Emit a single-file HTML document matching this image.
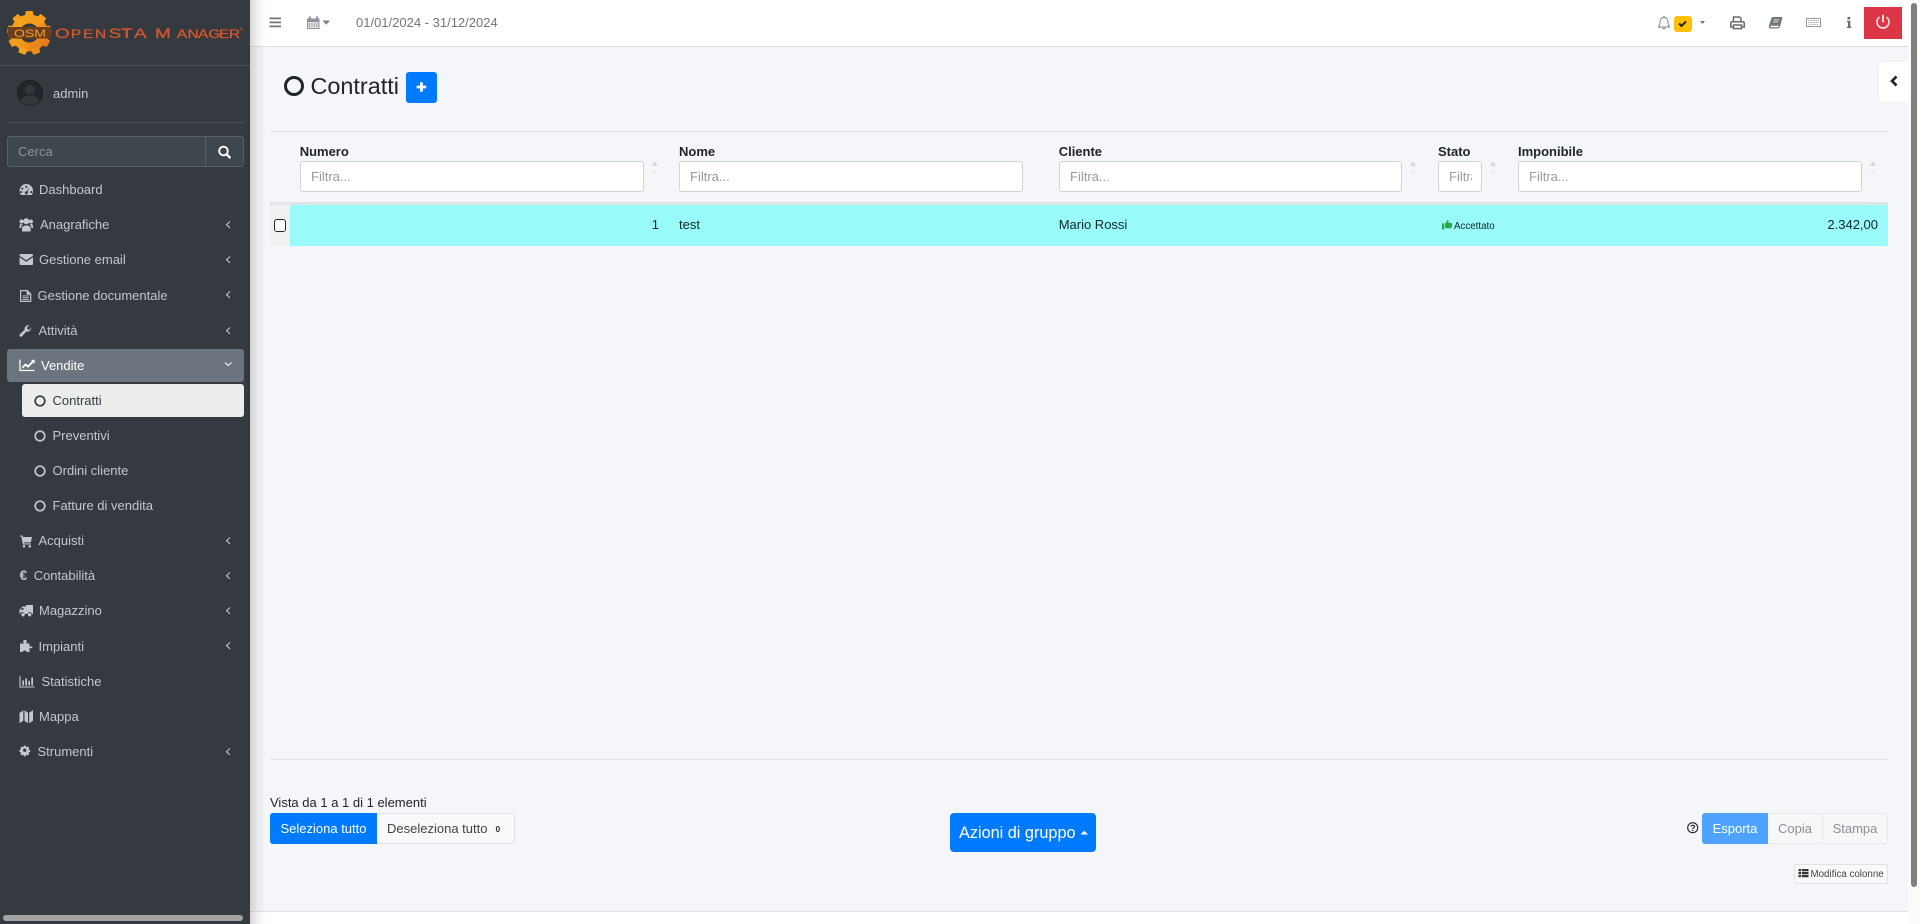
<!DOCTYPE html>
<html lang="it"><head><meta charset="utf-8"><title>Contratti</title>
<style>
html,body{margin:0;padding:0;width:1920px;height:924px;overflow:hidden;background:#fff;font-family:"Liberation Sans",sans-serif;font-size:13px;color:#212529}
*{box-sizing:border-box}
.a{position:absolute}
.t{position:absolute;white-space:nowrap;line-height:20px;height:20px}
#side{position:absolute;left:0;top:0;width:250px;height:924px;background:#343a40;z-index:3}
#side .t{color:#c2c7d0}
#shadow{position:absolute;left:250px;top:0;width:16px;height:924px;background:linear-gradient(90deg,rgba(0,0,0,.15),rgba(0,0,0,.05) 50%,rgba(0,0,0,0));z-index:2}
#top{position:absolute;left:250px;top:0;width:1658px;height:47px;background:#fff;border-bottom:1px solid #dee2e6}
#main{position:absolute;left:250px;top:47px;width:1658px;height:864px;background:#f4f6f9}
.inp{position:absolute;top:161px;height:31px;background:#fff;border:1px solid #ced4da;border-radius:3px;color:#939ba2;line-height:29px;padding-left:10px;overflow:hidden;white-space:nowrap}
.th{font-weight:bold;color:#212529}
.btn{position:absolute;line-height:31px;text-align:center;white-space:nowrap}
svg{position:absolute;left:0;top:0;overflow:visible}
</style></head><body>
<div id="top"></div>
<div id="main"></div>
<div class="a" style="left:250px;top:911px;width:1658px;height:13px;background:#fff;border-top:1px solid #dee2e6"></div>
<div class="a" style="left:1908px;top:0;width:12px;height:924px;background:#fbfbfb"></div>
<div class="a" style="left:1911px;top:3px;width:6px;height:884px;background:#7f7f7f;border-radius:3px"></div>
<div id="shadow"></div>

<!-- top bar text -->
<div class="t" style="left:356px;top:12.5px;color:#6f767d">01/01/2024 - 31/12/2024</div>
<div class="a" style="left:1864px;top:7px;width:38px;height:32px;background:#dc3545"></div>
<div class="a" style="left:1674px;top:16px;width:18px;height:16px;background:#ffc107;border-radius:3px"></div>
<div class="a" style="left:1878.5px;top:62px;width:29.5px;height:40px;background:#fff;border-radius:5px 0 0 5px;box-shadow:-1px 0 2px rgba(0,0,0,.04)"></div>

<!-- title -->
<div class="t" style="left:310.5px;top:71px;font-size:23.4px;line-height:30px;height:30px;color:#212529">Contratti</div>
<div class="a" style="left:406px;top:72px;width:31px;height:31px;background:#007bff;border-radius:3px"></div>

<!-- table -->
<div class="a" style="left:270px;top:131px;width:1618px;height:1px;background:#dee2e6"></div>
<div class="t th" style="left:299.7px;top:142px">Numero</div>
<div class="t th" style="left:679px;top:142px">Nome</div>
<div class="t th" style="left:1058.7px;top:142px">Cliente</div>
<div class="t th" style="left:1438px;top:142px">Stato</div>
<div class="t th" style="left:1518px;top:142px">Imponibile</div>
<div class="inp" style="left:300px;width:344px">Filtra...</div>
<div class="inp" style="left:679px;width:344px">Filtra...</div>
<div class="inp" style="left:1059px;width:343px">Filtra...</div>
<div class="inp" style="left:1438px;width:44px"><span style="display:block;width:23px;overflow:hidden">Filtra...</span></div>
<div class="inp" style="left:1518px;width:344px">Filtra...</div>
<div class="a" style="left:270px;top:202px;width:1618px;height:3px;background:#e2e5e8"></div>
<div class="a" style="left:270px;top:204.7px;width:20px;height:41px;background:#f0f1f3"></div>
<div class="a" style="left:290px;top:204.7px;width:1598px;height:41px;background:#99fafa"></div>
<div class="a" style="left:274px;top:218.5px;width:12px;height:13px;background:#fff;border:1px solid #212529;border-radius:3px"></div>
<div class="t" style="left:600px;width:59px;text-align:right;top:215px;color:#10282a">1</div>
<div class="t" style="left:679px;top:215px;color:#10282a">test</div>
<div class="t" style="left:1058.7px;top:215px;color:#10282a">Mario Rossi</div>
<div class="t" style="left:1454px;top:216.5px;font-size:9.75px;color:#10282a">Accettato</div>
<div class="t" style="left:1778px;width:100px;text-align:right;top:215px;color:#10282a">2.342,00</div>

<!-- bottom -->
<div class="a" style="left:270px;top:759px;width:1618px;height:1px;background:#dee2e6"></div>
<div class="t" style="left:270px;top:793px">Vista da 1 a 1 di 1 elementi</div>
<div class="btn" style="left:270px;top:813px;width:107px;height:31px;background:#007bff;color:#fff;border-radius:3px 0 0 3px">Seleziona tutto</div>
<div class="a" style="left:377px;top:813px;width:138px;height:31px;background:#f8f9fa;border:1px solid #dfe2e5;border-left:0;border-radius:0 3px 3px 0"></div>
<div class="t" style="left:387px;top:819px;color:#444">Deseleziona tutto</div>
<div class="t" style="left:495.5px;top:818.5px;font-size:8.5px;font-weight:bold;color:#333">0</div>
<div class="a" style="left:950px;top:813px;width:146px;height:39px;background:#007bff;border-radius:4px"></div>
<div class="t" style="left:959px;top:823px;font-size:16.25px;color:#fff">Azioni di gruppo</div>
<div class="a" style="left:1702px;top:813px;width:66px;height:31px;background:#4da3ff;border-radius:3px 0 0 3px;color:#fff;line-height:31px;text-align:center">Esporta</div>
<div class="a" style="left:1768px;top:813px;width:55px;height:31px;background:#f6f7f9;border:1px solid #e6e8ea;border-left:0;color:#8b8f93;line-height:30px;text-align:center">Copia</div>
<div class="a" style="left:1823px;top:813px;width:65px;height:31px;background:#f6f7f9;border:1px solid #e6e8ea;border-left:0;border-radius:0 3px 3px 0;color:#8b8f93;line-height:30px;text-align:center">Stampa</div>
<div class="a" style="left:1794px;top:864px;width:94px;height:20px;background:#f8f9fa;border:1px solid #dfe2e5;border-radius:2px"></div>
<div class="t" style="left:1810.5px;top:864.5px;font-size:9.75px;color:#444">Modifica colonne</div>

<!-- main icons -->
<svg width="1920" height="924" style="z-index:1">
 <g fill="#6c757d">
  <!-- hamburger -->
  <path d="M269.500 17.500h11.500v1.700h-11.500zM269.500 21.500h11.500v1.700h-11.500zM269.500 25.500h11.500v1.700h-11.500z" fill="#70767c"/>
  <!-- calendar -->
  <path fill-rule="evenodd" d="M307 18.500h2v-2h2v2h5v-2h2v2h1.500v10.500h-12.500zM308 22v6h10.500v-6z" fill="#8d9399"/>
  <path d="M309.500 22v6M312 22v6M314.500 22v6M317 22v6M308 24h10.500M308 26h10.500" stroke="#9aa0a6" stroke-width=".7" fill="none"/>
  <path d="M322.500 20.500h7.500l-3.750 4.200z" fill="#7a8087"/>
  <!-- bell -->
  <path d="M1664 17.500c-2.600 0-3.900 2-3.900 4.200 0 3-.8 4.200-1.800 5.300h11.400c-1-1.100-1.800-2.300-1.800-5.300 0-2.200-1.300-4.200-3.900-4.200z" fill="none" stroke="#7a7f84" stroke-width=".9"/>
  <path d="M1662.500 28h3a1.500 1.300 0 0 1-3 0zM1663.400 16h1.200v1.700h-1.200z" fill="#7a7f84"/>
  <!-- check in badge -->
  <path d="M1679 23.500l2.500 2.500 4.500-4.500" fill="none" stroke="#212529" stroke-width="2"/>
  <path d="M1700 21h5l-2.500 3z" fill="#777"/>
  <!-- print -->
  <path d="M1733.500 21.500v-4.500h6l1.500 1.500v3M1733.500 27h-2.700v-4a1.300 1.300 0 0 1 1.300-1.300h10.800a1.300 1.300 0 0 1 1.300 1.300v4h-2.700M1733.500 25h8v3.600h-8z" fill="none" stroke="#666b70" stroke-width="1.500"/>
  <!-- book -->
  <path fill-rule="evenodd" d="M1772.800 17h8.700c.7 0 1 .5.800 1.200l-2.200 8.300c-.4 1.300-1.300 2-2.600 2h-6.800c-1.500 0-2.200-1.300-1.800-2.700l2.500-7.700c.2-.6.700-1.100 1.300-1.100zM1770.500 25.700c-.3.900.2 1.600 1 1.600h6.200c.6 0 .8-.3 1-.7l.2-.9zM1774 19.500l-.2.800h5l.2-.8zM1773.400 21.500l-.2.800h5l.2-.8z" fill="#73787d"/>
  <!-- keyboard -->
  <path fill-rule="evenodd" d="M1806.500 18h14a.5.500 0 0 1 .5.500v8a.5.500 0 0 1-.5.500h-14a.5.500 0 0 1-.5-.5v-8a.5.500 0 0 1 .5-.500zM1807 19v7h13v-7z" fill="#9a9a9a"/>
  <path d="M1808 20.500h11M1808 22.500h11M1809 24.600h9" stroke="#aaa" stroke-width="1.100" stroke-dasharray="1 .6" fill="none"/>
  <!-- info -->
  <path d="M1847.500 17h2.800v2.400h-2.800zM1847 20.800h3.300v5.900h1v1.300h-4.300v-1.300h1v-4.600h-1z" fill="#666b70"/>
  <!-- power -->
  <path d="M1879 17.500a6 6 0 1 0 8 0" fill="none" stroke="#f9dcdf" stroke-width="1.700" stroke-linecap="round"/>
  <path d="M1883 15.500v6" fill="none" stroke="#f9dcdf" stroke-width="2" stroke-linecap="round"/>
  <!-- chevron tab -->
  <path d="M1896.500 76.500l-4.500 4.500 4.500 4.500" fill="none" stroke="#212529" stroke-width="2.700"/>
  <!-- title circle -->
  <circle cx="294" cy="86" r="8.500" fill="none" stroke="#212529" stroke-width="3"/>
  <path d="M421.400 82.200v9.600M416.600 87h9.600" stroke="#fff" stroke-width="2.800" fill="none"/>
  <!-- sort arrows -->
  <g fill="#d5d8dc">
   <path d="M651.500 166l3.200-5 3.200 5zM1409.800 166l3.200-5 3.200 5zM1489.800 166l3.200-5 3.200 5zM1869.800 166l3.200-5 3.200 5z"/>
  </g>
  <g fill="#eceef0">
   <path d="M651.500 170l3.200 5 3.200-5zM1409.800 170l3.200 5 3.200-5zM1489.800 170l3.200 5 3.200-5zM1869.800 170l3.200 5 3.200-5z"/>
  </g>
  <!-- thumb -->
  <path d="M1442 223.500h2.200v6h-2.200zM1445 223.500c1-.6 2-1.800 2.300-3.500.8-.3 1.500.6 1.300 2l-.2 1h2.800c.8 0 1 .8.700 1.300.4.500.3 1 0 1.400.2.500.1 1-.3 1.300 0 1-.5 1.300-1.300 1.300h-3c-1 0-1.500-.3-2.400-.6z" fill="#28a745"/>
  <!-- caret azioni -->
  <path d="M1080.500 834.500h7.500l-3.750-3.700z" fill="#fff"/>
  <!-- question -->
  <circle cx="1692.700" cy="827.700" r="5" fill="none" stroke="#212529" stroke-width="1.100"/>
  <path d="M1690.900 826.400c.2-1.300 3.600-1.600 3.600.3 0 1.300-1.700 1.200-1.800 2.400" fill="none" stroke="#212529" stroke-width="1.100"/>
  <path d="M1692 829.800h1.400v1.300h-1.400z" fill="#212529"/>
  <!-- th-list -->
  <path d="M1798.500 869h2.700v2.200h-2.700zM1802 869h6.500v2.200H1802zM1798.500 872h2.700v2.200h-2.700zM1802 872h6.500v2.200H1802zM1798.500 875h2.700v2.200h-2.700zM1802 875h6.500v2.200H1802z" fill="#333"/>
 </g>
</svg>

<div id="side">
 <!-- logo -->
 <svg width="250" height="66">
  <defs><linearGradient id="g" x1="0" y1="0" x2="1" y2="1"><stop offset="0" stop-color="#f8a51d"/><stop offset=".5" stop-color="#f39a1a"/><stop offset="1" stop-color="#e8761c"/></linearGradient></defs>
  <circle cx="29.300" cy="33" r="14" fill="none" stroke="url(#g)" stroke-width="9"/>
  <g fill="#f5a01c">
   <path d="M25.800 11h7l1 6h-9z"/>
   <path d="M25.800 11h7l1 6h-9z" transform="rotate(40 29.300 33)"/><path d="M25.800 11h7l1 6h-9z" transform="rotate(80 29.300 33)" fill="#ec8a1c"/>
   <path d="M25.800 11h7l1 6h-9z" transform="rotate(120 29.300 33)" fill="#e87d1c"/><path d="M25.800 11h7l1 6h-9z" transform="rotate(160 29.300 33)" fill="#ee8f1b"/>
   <path d="M25.800 11h7l1 6h-9z" transform="rotate(200 29.300 33)"/><path d="M25.800 11h7l1 6h-9z" transform="rotate(240 29.300 33)"/>
   <path d="M25.800 11h7l1 6h-9z" transform="rotate(280 29.300 33)"/><path d="M25.800 11h7l1 6h-9z" transform="rotate(320 29.300 33)"/>
  </g>
  <rect x="8" y="27" width="43" height="11.500" fill="#6e3d1a"/>
  <text x="14" y="37" font-family="Liberation Sans" font-size="11" fill="#eaa23c" textLength="32" lengthAdjust="spacingAndGlyphs">OSM</text>
  <text transform="translate(0 37.800) scale(1.35 1)" font-family="Liberation Sans" fill="#d9582b" stroke="#d9582b" stroke-width=".25"><tspan font-size="14" x="40.700">O</tspan><tspan font-size="11.500" x="52.400 61.500 70.400">PEN</tspan><tspan font-size="14" x="80.500 89.600 99.300 114.800">STAM</tspan><tspan font-size="11.500" x="130.900 138.900 146.700 154.400 162.200 169.600">ANAGER</tspan></text>
  <text x="239.500" y="31" font-family="Liberation Sans" font-size="5" fill="#b8603a">®</text>
 </svg>
 <div class="a" style="left:0;top:65px;width:250px;height:1px;background:#4b545c"></div>
 <svg width="60" height="120"><circle cx="30" cy="93" r="12.500" fill="#22262a" stroke="#1b1e21" stroke-width="1"/><circle cx="30" cy="89.500" r="4.800" fill="#32373c"/><path d="M20.500 101c1-4 5-5.500 9.500-5.500s8.500 1.500 9.500 5.500a12.500 12.500 0 0 1-19 0z" fill="#32373c"/></svg>
 <div class="t" style="left:53px;top:83.500px">admin</div>
 <div class="a" style="left:7px;top:122px;width:237px;height:1px;background:#4b545c"></div>
 <div class="a" style="left:7px;top:136px;width:198px;height:31px;background:#3f474e;border:1px solid #56606a;border-right:0;border-radius:3px 0 0 3px;color:#8e959b;padding-left:10px;line-height:29px">Cerca</div>
 <div class="a" style="left:205px;top:136px;width:39px;height:31px;background:#3f474e;border:1px solid #56606a;border-radius:0 3px 3px 0"></div>
 <div class="a" style="left:7px;top:349px;width:237px;height:33px;background:#6c757d;border-radius:3px"></div>
 <div class="a" style="left:22px;top:384px;width:222px;height:33px;background:#eceeed;border-radius:3px"></div>

 <div class="t" style="left:39px;top:180px">Dashboard</div>
 <div class="t" style="left:40px;top:214.500px">Anagrafiche</div>
 <div class="t" style="left:39px;top:249.500px">Gestione email</div>
 <div class="t" style="left:37.500px;top:285.500px">Gestione documentale</div>
 <div class="t" style="left:38.500px;top:320.500px">Attività</div>
 <div class="t" style="left:41px;top:355.500px;color:#fff">Vendite</div>
 <div class="t" style="left:52.500px;top:390.500px;color:#343a40">Contratti</div>
 <div class="t" style="left:52.500px;top:425.500px">Preventivi</div>
 <div class="t" style="left:52.500px;top:460.500px">Ordini cliente</div>
 <div class="t" style="left:52.500px;top:495.500px">Fatture di vendita</div>
 <div class="t" style="left:38.500px;top:530.500px">Acquisti</div>
 <div class="t" style="left:33.700px;top:565.500px">Contabilità</div>
 <div class="t" style="left:39px;top:600.500px">Magazzino</div>
 <div class="t" style="left:38.500px;top:636.500px">Impianti</div>
 <div class="t" style="left:41.500px;top:671.500px">Statistiche</div>
 <div class="t" style="left:39px;top:706.500px">Mappa</div>
 <div class="t" style="left:37.500px;top:741.500px">Strumenti</div>
 <div class="t" style="left:19.500px;top:564.500px;font-weight:bold;font-size:14px">€</div>

 <svg width="250" height="924">
  <!-- search icon -->
  <circle cx="223.500" cy="151" r="4.300" fill="none" stroke="#fff" stroke-width="1.900"/><path d="M226.500 154.200l3.200 3.200" stroke="#fff" stroke-width="2.400" stroke-linecap="round"/>
  <g fill="#c2c7d0">
   <!-- dashboard gauge -->
   <path fill-rule="evenodd" d="M26.300 184c3.700 0 6.700 3 6.700 6.700 0 1.700-.5 3-1.300 4.300H20.900c-.8-1.300-1.300-2.600-1.300-4.300 0-3.700 3-6.700 6.700-6.700zM26.300 185.700a1.100 1.100 0 1 0 .01 0zM22.300 187.500a1.100 1.100 0 1 0 .01 0zM21.200 191a1.100 1.100 0 1 0 .01 0zM31.200 191a1.100 1.100 0 1 0 .01 0zM29.800 187.300l-3.200 4a1.600 1.600 0 1 0 1 .6z"/>
   <!-- users -->
   <circle cx="26.300" cy="221.300" r="3"/><circle cx="21.500" cy="221.500" r="2"/><circle cx="31" cy="221.500" r="2"/>
   <path d="M22 231.500v-3c0-2.200 1.600-3 4.300-3s4.300.8 4.300 3v3zM19.500 228v-2c0-1.500.8-2 2-2l1.500.4c-1.400.6-1.800 1.700-1.800 3.600zM33 228v-2c0-1.500-.8-2-2-2l-1.500.4c1.400.6 1.800 1.700 1.800 3.600z"/>
   <!-- email -->
   <path d="M19.500 255c0-.6.5-1 1-1h11.500c.6 0 1 .4 1 1v.7l-6.750 4.500-6.750-4.500zM19.500 257.300l6.750 4.400 6.750-4.400v6.700c0 .6-.4 1-1 1H20.500c-.5 0-1-.4-1-1z"/>
   <!-- document -->
   <path fill-rule="evenodd" d="M20 290h7.500l3.800 3.800V302H20zM21.200 291.200v9.600h8.900v-6.100h-3.500v-3.500zM22.500 295.500h6.300v.9h-6.300zM22.500 297.300h6.300v.9h-6.300zM22.500 299.100h6.300v.9h-6.300z"/>
   <!-- wrench -->
   <path d="M31 327.300c.5 2-.8 4-3 4.300-.6.100-1.100 0-1.600-.1l-4.300 4.800c-.6.700-1.600.7-2.200.100-.6-.6-.6-1.500 0-2.100l4.700-4.500c-.4-2.600 1.700-5 4.700-4.600l-2.200 2.200.5 2 2 .5z"/>
   <!-- cart -->
   <path d="M20 535.500h2.500l.4 1.500h9.100l-1.200 5.400h-7l.2 1h6.800v1.100h-7.900l-1.600-8h-1.300v-1zM24 545a1.300 1.300 0 1 1-.01 0zM29.800 545a1.300 1.300 0 1 1-.01 0z"/>
   <!-- truck -->
   <path fill-rule="evenodd" d="M26 605h7v9h-1.100a2.300 2.300 0 0 0-4.500 0h-2.900a2.300 2.300 0 0 0-4.500 0h-.5v-4.500l3-3h3.500zM21.800 608l-1.500 1.700h3.200V608z"/><circle cx="23" cy="614.700" r="1.700"/><circle cx="29.600" cy="614.700" r="1.700"/>
   <!-- puzzle -->
   <circle cx="25" cy="641.700" r="1.800"/>
   <path d="M20 643.500h9.500v3h2.700v1.600h-2.700v3.900h-2.800a2.100 2.100 0 0 0-4 0H20z"/>
   <!-- map -->
   <path d="M19.500 713l3.800-2.700v10.500l-3.800 2.500zM24.500 710.300l3.500 2.400v10.500l-3.500-2.400zM29.200 712.700l3.800-2.500V720.700l-3.800 2.500z"/>
   <!-- cog -->
   <path fill-rule="evenodd" transform="translate(25 751.500) scale(.76) translate(-25.550 -753.500)" d="M24 745.800h2.500l.4 1.500 1.100.5 1.400-.8 1.700 1.700-.8 1.400.5 1.100 1.500.4v2.400l-1.500.4-.5 1.100.8 1.400-1.700 1.700-1.400-.8-1.100.5-.4 1.500H24l-.4-1.500-1.100-.5-1.400.8-1.700-1.700.8-1.400-.5-1.100-1.500-.4v-2.400l1.500-.4.500-1.100-.8-1.400 1.700-1.700 1.400.8 1.100-.5zM25.200 749.500a2.300 2.300 0 1 0 .01 0z"/>
  </g>
  <!-- chart line (active) -->
  <path d="M20 359.500v11h14.500" fill="none" stroke="#fff" stroke-width="1.300"/>
  <path d="M22 367l3.500-3.500 2.500 2 4.500-4.800-1.300-.7h3.300v3.300l-1-1-5.500 5.300-2.500-2-2.600 2.700z" fill="#fff" stroke="#fff" stroke-width=".4"/>
  <!-- bar chart -->
  <path d="M20 676v11h14.500" fill="none" stroke="#c2c7d0" stroke-width="1.100"/>
  <path d="M22.300 680.500h1.700v5h-1.700zM25.300 678.500h1.700v7h-1.700zM28.300 681h1.700v4.500h-1.700zM31.300 677.500h1.700v8h-1.700z" fill="#c2c7d0"/>
  <!-- sub-circles -->
  <g fill="none" stroke-width="1.700">
   <circle cx="40" cy="401" r="4.800" stroke="#343a40"/>
   <circle cx="40" cy="436" r="4.800" stroke="#c2c7d0"/>
   <circle cx="40" cy="471" r="4.800" stroke="#c2c7d0"/>
   <circle cx="40" cy="506" r="4.800" stroke="#c2c7d0"/>
  </g>
  <!-- chevrons -->
  <g fill="none" stroke="#c2c7d0" stroke-width="1.100">
   <path d="M230 221.500l-3.500 3.200 3.500 3.200M230 256.500l-3.500 3.200 3.500 3.200M230 291.500l-3.500 3.200 3.500 3.200M230 327.500l-3.500 3.200 3.500 3.200M230 537.500l-3.500 3.200 3.500 3.200M230 572.500l-3.500 3.200 3.500 3.200M230 607.500l-3.500 3.200 3.500 3.200M230 642.500l-3.500 3.200 3.500 3.200M230 748.500l-3.500 3.200 3.500 3.200"/>
   <path d="M225 362.500l3.200 3 3.200-3" stroke="#fff"/>
  </g>
 </svg>
 <div class="a" style="left:3px;top:915px;width:240px;height:6px;background:#a3a3a3;border-radius:3px"></div>
</div>
</body></html>
